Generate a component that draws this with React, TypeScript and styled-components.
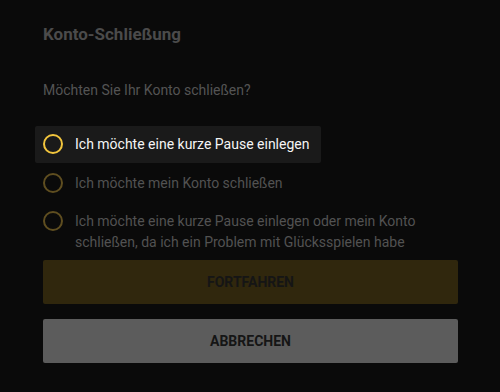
import { useState } from "react";
import styled, { createGlobalStyle } from "styled-components";

const GlobalStyle = createGlobalStyle`
  html, body {
    margin: 0;
    padding: 0;
    background: #0a0a0a;
    font-family: Roboto, "Noto Sans", "Liberation Sans", sans-serif;
  }
`;

const Dialog = styled.div`
  width: 500px;
  height: 392px;
  box-sizing: border-box;
  padding: 22px 42px 0 43px;
  display: flex;
  flex-direction: column;
`;

const Title = styled.h2`
  margin: 0;
  font-size: 17px;
  line-height: 24px;
  font-weight: 700;
  color: #4b4b4b;
`;

const Question = styled.p`
  margin: 34px 0 0;
  font-size: 14px;
  line-height: 20px;
  color: #545454;
`;

const Options = styled.div`
  display: flex;
  flex-direction: column;
  gap: 2px;
  margin: 26px 0 0 -8px;
`;

const Option = styled.label<{ $active: boolean }>`
  display: flex;
  align-items: flex-start;
  gap: 12px;
  padding: 8px 8px 8px 8px;
  border-radius: 2px;
  width: ${(p) => (p.$active ? "fit-content" : "auto")};
  padding-right: ${(p) => (p.$active ? "12px" : "8px")};
  background: ${(p) => (p.$active ? "#1a1a1a" : "transparent")};
  cursor: pointer;
`;

const Radio = styled.span<{ $active: boolean }>`
  flex: none;
  width: 20px;
  height: 20px;
  box-sizing: border-box;
  border-radius: 50%;
  border: 2px solid ${(p) => (p.$active ? "#f2c53d" : "#5f4e20")};
`;

const OptionText = styled.span<{ $active: boolean }>`
  font-size: 14px;
  line-height: 20.5px;
  color: ${(p) => (p.$active ? "#f5f5f5" : "#525252")};
`;

const Button = styled.button<{ $variant: "primary" | "secondary" }>`
  display: block;
  width: 415px;
  height: 44px;
  border: none;
  border-radius: 2px;
  font-family: inherit;
  font-size: 14px;
  font-weight: 700;
  color: #151515;
  background: ${(p) => (p.$variant === "primary" ? "#30270d" : "#5c5c5c")};
  margin-top: ${(p) => (p.$variant === "primary" ? "0" : "15px")};
  cursor: pointer;
`;

const options = [
  "Ich möchte eine kurze Pause einlegen",
  "Ich möchte mein Konto schließen",
  "Ich möchte eine kurze Pause einlegen oder mein Konto schließen, da ich ein Problem mit Glücksspielen habe",
];

export default function App() {
  const [selected, setSelected] = useState(0);
  return (
    <>
      <GlobalStyle />
      <Dialog>
        <Title>Konto-Schließung</Title>
        <Question>Möchten Sie Ihr Konto schließen?</Question>
        <Options>
          {options.map((text, i) => (
            <Option key={i} $active={i === selected} onClick={() => setSelected(i)}>
              <Radio $active={i === selected} />
              <OptionText $active={i === selected}>{text}</OptionText>
            </Option>
          ))}
        </Options>
        <Button $variant="primary">FORTFAHREN</Button>
        <Button $variant="secondary">ABBRECHEN</Button>
      </Dialog>
    </>
  );
}
